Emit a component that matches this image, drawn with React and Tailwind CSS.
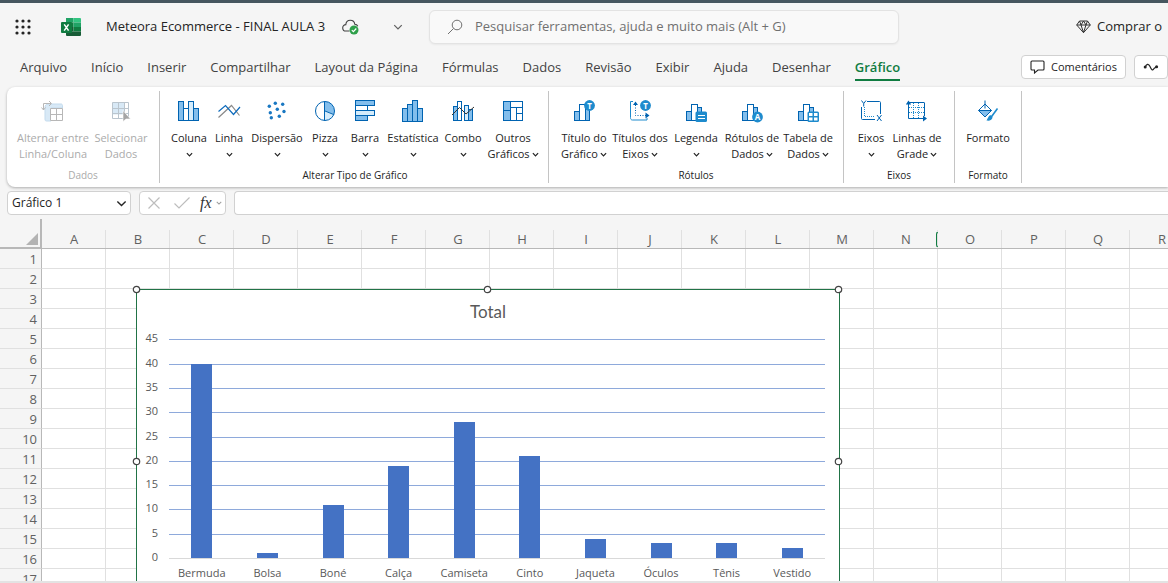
import { useState } from 'react';

const BLUE = '#0f6cbd';
const EDGE = '#0063b1';
const FILL = '#83beec';
const LIGHT = '#d5ecfb';
const BADGE = '#1e8bcd';

function Icon({ children, crisp = false, size = 24 }) {
  return (
    <svg width={size} height={size} viewBox="0 0 24 24" fill="none" aria-hidden="true" className="shrink-0" shapeRendering={crisp ? 'crispEdges' : 'auto'}>
      {children}
    </svg>
  );
}

function Chevron({ size = 8, className = '', width = 1.4 }) {
  return (
    <svg width={size} height={size} viewBox="0 0 8 8" fill="none" aria-hidden="true" className={className}>
      <path d="M1 2.5 4 5.5 7 2.5" stroke="currentColor" strokeWidth={width} />
    </svg>
  );
}

// three small columns used behind the badge of the label icons
function MiniBars() {
  return (
    <g stroke={EDGE} shapeRendering="crispEdges">
      <path d="M2.5 12.5h5v9h-5z" fill={FILL} />
      <path d="M7.5 5.5h6v16h-6z" fill="#fff" />
      <path d="M13.5 8.5h4v13h-4z" fill={FILL} />
    </g>
  );
}

function BadgeLetter({ x, y, children }) {
  return (
    <>
      <circle cx={x} cy={y} r="5.4" fill={BADGE} />
      <text x={x} y={y + 3} textAnchor="middle" fontSize="8" fontWeight="700" fill="#fff" fontFamily="Open Sans, sans-serif">{children}</text>
    </>
  );
}

const icons = {
  swap: (
    <Icon>
      <path d="M4 20.5V8.5c0-2 1-3.500 3-3.500h13c1 0 1.500.8 1.500 1.500V9H10v13H5.500c-1 0-1.500-.7-1.500-1.500z" fill="#cfe4f5" stroke="#b5d3ea" />
      <path d="M9.500 9.500h12v12h-12zM15.500 9.500v12M9.500 15.500h12" stroke="#a6a6a6" fill="#fff" />
      <path d="M2.500 11V4.500H10M8 2l2.500 2.500L8 7M.5 8.500l2 2.500 2-2.500" stroke="#a6a6a6" />
    </Icon>
  ),
  select: (
    <Icon>
      <path d="M3.500 3.500h12v12h-12z" fill="#cfe4f5" />
      <path d="M3.500 3.500h16v16h-16zM9.500 3.500v16M15.500 3.500v16M3.500 9.500h16M3.500 14.500h16" stroke="#a9b7c2" />
      <path d="M14 11.500v11l3-2.500h4.500z" fill="#8f8f8f" stroke="#fff" strokeWidth=".6" />
    </Icon>
  ),
  column: (
    <Icon crisp>
      <g stroke={EDGE}>
        <path d="M1.500 2.500h5v19h-5z" fill={FILL} />
        <path d="M6.500 9.500h5v12h-5z" fill="#fff" />
        <path d="M11.500 2.500h5v19h-5z" fill={LIGHT} />
        <path d="M16.500 9.500h5v12h-5z" fill={FILL} />
      </g>
    </Icon>
  ),
  line: (
    <Icon>
      <path d="M1.500 18.500 14.500 6.500 22.500 16.500" stroke="#8a8a8a" strokeWidth="1.200" />
      <path d="M1.500 12.500 8.500 6.500 16.500 15.500 23 8" stroke={BLUE} strokeWidth="1.200" />
    </Icon>
  ),
  scatter: (
    <Icon>
      {[[10.3, 4.3], [17.7, 5.3], [4.3, 7.3], [12.3, 10.2], [5.3, 13.7], [19, 12.5], [14.3, 17.3], [6.3, 18.7]].map(([x, y]) => (
        <circle key={x} cx={x} cy={y} r="1.700" fill="#1a78c2" />
      ))}
    </Icon>
  ),
  pie: (
    <Icon>
      <path d="M12 2.500a9.500 9.500 0 0 1 8.800 13L12 12z" fill={FILL} />
      <path d="M12 12l8.800 3.600A9.500 9.500 0 0 1 12 21.500z" fill={LIGHT} />
      <circle cx="12" cy="12" r="9.500" stroke={EDGE} />
      <path d="M11.500 2.500v19M12 12l8.800 3.600" stroke={EDGE} />
    </Icon>
  ),
  bar: (
    <Icon crisp>
      <g stroke={EDGE}>
        <path d="M2.500 1.500h19v5h-19z" fill={FILL} />
        <path d="M2.500 6.500h12v5h-12z" fill="#fff" />
        <path d="M2.500 11.500h19v5h-19z" fill={LIGHT} />
        <path d="M2.500 16.500h12v5h-12z" fill={FILL} />
      </g>
    </Icon>
  ),
  stats: (
    <Icon crisp>
      <g stroke={EDGE} fill={FILL}>
        <path d="M1.500 9.500h5v13h-5zM6.500 5.500h5v17h-5zM11.500 1.500h5v21h-5zM16.500 9.500h5v13h-5z" />
      </g>
    </Icon>
  ),
  combo: (
    <Icon>
      <g stroke={EDGE} shapeRendering="crispEdges">
        <path d="M2.500 7.500h4v14h-4z" fill={FILL} />
        <path d="M6.500 2.500h4v19h-4z" fill="#fff" />
        <path d="M13.500 6.500h4v15h-4z" fill={LIGHT} />
        <path d="M17.500 10.500h4v11h-4z" fill={FILL} />
      </g>
      <path d="M1 16 8.500 8.500 15 15 23 8" stroke="#333" />
    </Icon>
  ),
  others: (
    <Icon crisp>
      <path d="M2.500 2.500h19v19h-19z" fill="#fff" />
      <path d="M2.500 2.500h7v19h-7z" fill={FILL} />
      <path d="M2.500 2.500h19v19h-19zM9.500 2.500v19M2.500 11.500h7M9.500 8.500h12M15.500 8.500v13M15.500 14.500h6" stroke={EDGE} />
    </Icon>
  ),
  chartTitle: (
    <Icon>
      <MiniBars />
      <BadgeLetter x={17.5} y={6.5}>T</BadgeLetter>
    </Icon>
  ),
  axisTitles: (
    <Icon>
      <path d="M5 2.500H2.500v16c0 1.500.5 2.500 2 2.500H19v-2" stroke={BADGE} />
      <path d="M7.500 6v10.500H18" stroke={EDGE} strokeDasharray="1 1.500" />
      <path d="M5 6 7.500 2.500l2.500 3.500zM17.500 13.500l4 3-4 3z" fill={EDGE} />
      <BadgeLetter x={17.5} y={6.5}>T</BadgeLetter>
    </Icon>
  ),
  legend: (
    <Icon>
      <MiniBars />
      <rect x="11.500" y="12.500" width="11.500" height="10.500" rx="1.500" fill={BADGE} />
      <path d="M14 16.500h7M14 19.500h7" stroke="#fff" />
    </Icon>
  ),
  dataLabels: (
    <Icon>
      <MiniBars />
      <BadgeLetter x={17.5} y={18}>A</BadgeLetter>
    </Icon>
  ),
  dataTable: (
    <Icon>
      <MiniBars />
      <rect x="11.500" y="12.500" width="11.500" height="10.500" rx="1.500" fill={BADGE} />
      <path d="M13 14h3.500v3H13zM18 14h3.500v3H18zM13 18.500h3.500v3H13zM18 18.500h3.500v3H18z" fill="#fff" />
    </Icon>
  ),
  axes: (
    <Icon>
      <path d="M8 2.500h12.500c.7 0 1 .5 1 1V15M2.500 8v11.500c0 .7.4 1 1 1H16" stroke={EDGE} />
      <path d="M5.500 8v9.500H16" stroke={BADGE} strokeDasharray="1 1" />
      <path d="M2.500 1.500 4.700 4.500 7 1.500M4.700 4.500v3M18 16l4.500 6M22.500 16 18 22" stroke={EDGE} />
    </Icon>
  ),
  gridlines: (
    <Icon>
      <path d="M4 3.500h15c.4 0 .5.200.5.500v13M3.500 5v14.500H18" stroke={EDGE} />
      <path d="M8.500 4v15M13.500 4v15M4 8.500h15M4 13.500h15" stroke={BADGE} strokeDasharray="1 1" />
      <path d="M.8 5.500 3.500 1.500l2.700 4zM18 16.500l4 3-4 3z" fill={EDGE} />
    </Icon>
  ),
  format: (
    <Icon>
      <path d="M2.500 11.500 9 5l6.500 6.500L9 18z" fill="#fff" />
      <path d="M2.500 11.500h13L9 18z" fill={FILL} />
      <path d="M9 1.500v8M2.500 11.500 9 5l6.500 6.500L9 18zM2.500 11.500h13" stroke={EDGE} />
      <path d="M21.500 9.500 14.500 19" stroke={BADGE} strokeWidth="1.600" />
      <path d="M14.800 16.200c-2.300-.2-2.400 2.500-4.300 5.300 3 .6 5.800-.4 6-3.500z" fill={BADGE} />
    </Icon>
  ),
};

// menu: 'own' puts the arrow on its own line, 'inline' after the last word
const groups = [
  {
    name: 'Dados', pad: 'px-2', disabled: true,
    items: [
      { icon: 'swap', lines: ['Alternar entre', 'Linha/Coluna'], width: 'w-19' },
      { icon: 'select', lines: ['Selecionar', 'Dados'], width: 'w-15' },
    ],
  },
  {
    name: 'Alterar Tipo de Gráfico', pad: 'pl-[9px] pr-[7px]',
    items: [
      { icon: 'column', lines: ['Coluna'], width: 'w-10', menu: 'own' },
      { icon: 'line', lines: ['Linha'], width: 'w-10', menu: 'own' },
      { icon: 'scatter', lines: ['Dispersão'], width: 'w-14', menu: 'own' },
      { icon: 'pie', lines: ['Pizza'], width: 'w-10', menu: 'own' },
      { icon: 'bar', lines: ['Barra'], width: 'w-10', menu: 'own' },
      { icon: 'stats', lines: ['Estatística'], width: 'w-14', menu: 'own' },
      { icon: 'combo', lines: ['Combo'], width: 'w-11', menu: 'own' },
      { icon: 'others', lines: ['Outros', 'Gráficos'], width: 'w-14', menu: 'inline' },
    ],
  },
  {
    name: 'Rótulos', pad: 'px-[7px]',
    items: [
      { icon: 'chartTitle', lines: ['Título do', 'Gráfico'], width: 'w-14', menu: 'inline' },
      { icon: 'axisTitles', lines: ['Títulos dos', 'Eixos'], width: 'w-14', menu: 'inline' },
      { icon: 'legend', lines: ['Legenda'], width: 'w-14', menu: 'own' },
      { icon: 'dataLabels', lines: ['Rótulos de', 'Dados'], width: 'w-14', menu: 'inline' },
      { icon: 'dataTable', lines: ['Tabela de', 'Dados'], width: 'w-14', menu: 'inline' },
    ],
  },
  {
    name: 'Eixos', pad: 'px-[9px]',
    items: [
      { icon: 'axes', lines: ['Eixos'], width: 'w-9', menu: 'own' },
      { icon: 'gridlines', lines: ['Linhas de', 'Grade'], width: 'w-14', menu: 'inline' },
    ],
  },
  {
    name: 'Formato', pad: 'px-[7px]',
    items: [{ icon: 'format', lines: ['Formato'], width: 'w-13' }],
  },
];

function RibbonButton({ icon, lines, width, menu, disabled }) {
  return (
    <button type="button" disabled={disabled} className={`flex flex-col items-center text-[11px] leading-4 whitespace-nowrap ${width}`}>
      <span className={disabled ? 'mb-[7px] opacity-80' : 'mb-[7px]'}>{icons[icon]}</span>
      {lines.map((line, i) => (
        <span key={line} className="flex items-center gap-0.5">
          {line}
          {menu === 'inline' && i === lines.length - 1 && <Chevron size={7} />}
        </span>
      ))}
      {menu === 'own' && <span className="flex h-4 items-center"><Chevron size={7} /></span>}
    </button>
  );
}

function Ribbon() {
  return (
    <div className="ml-[7px] flex h-[100px] shrink-0 overflow-hidden rounded-l-lg bg-white py-1 shadow-[0_1px_3px_rgba(0,0,0,0.3)]">
      {groups.map(group => (
        <section key={group.name} aria-label={group.name} className={`flex shrink-0 flex-col justify-between border-r border-[#c4c4c4] pt-2 ${group.pad} ${group.disabled ? 'text-[#ababab]' : 'text-[#242424]'}`}>
          <div className="flex items-start">
            {group.items.map(item => <RibbonButton key={item.icon} {...item} disabled={group.disabled} />)}
          </div>
          <div className="text-center text-[10px] leading-4">{group.name}</div>
        </section>
      ))}
    </div>
  );
}

function TitleBar() {
  return (
    <header className="flex h-12 shrink-0 items-center text-[13px] text-[#242424]">
      <div className="flex w-[429px] shrink-0 items-center">
        <button type="button" aria-label="Iniciador de aplicativos" className="ml-[15px]">
          <svg width="16" height="16" viewBox="0 0 16 16" fill="#242424">
            {[2, 8, 14].map(y => [2, 8, 14].map(x => <circle key={`${x}-${y}`} cx={x} cy={y} r="1.600" />))}
          </svg>
        </button>
        <svg width="20" height="18" viewBox="0 0 20 18" className="ml-[30px] shrink-0" aria-hidden="true">
          <path d="M5 0h7.500v4.500H5z" fill="#21a366" />
          <path d="M12.500 0H19a1 1 0 0 1 1 1v3.500h-7.500z" fill="#33c481" />
          <path d="M5 4.500h7.500V9H5z" fill="#107c41" />
          <path d="M12.500 4.500H20V9h-7.500z" fill="#21a366" />
          <path d="M5 9h7.500v4.500H5z" fill="#185c37" />
          <path d="M12.500 9H20v4.500h-7.500z" fill="#107c41" />
          <path d="M5 13.500h15V17a1 1 0 0 1-1 1H6a1 1 0 0 1-1-1z" fill="#185c37" />
          <rect y="4" width="11" height="11" rx="1" fill="#107c41" />
          <path d="M3.200 6.300 7.600 12.700M7.600 6.300 3.200 12.700" stroke="#fff" strokeWidth="1.500" />
        </svg>
        <span className="ml-[25px] min-w-57 whitespace-nowrap">Meteora Ecommerce - FINAL AULA 3</span>
        <svg width="18" height="16" viewBox="0 0 18 16" fill="none" className="ml-2 shrink-0" aria-hidden="true">
          <path d="M7.500 12H4a3.200 3.200 0 0 1-.2-6.400C4 3 5.800 1.200 8.300 1.200S12.500 3 12.800 5.200c1.400 0 2.500.8 3 2" stroke="#424242" strokeWidth="1.100" />
          <circle cx="12" cy="11" r="4.500" fill="#2fa04a" />
          <path d="M9.800 11.100l1.600 1.600 2.900-3.200" stroke="#fff" strokeWidth="1.200" />
        </svg>
        <button type="button" aria-label="Opções do arquivo" className="mr-[26px] ml-auto text-[#616161]"><Chevron size={10} width={1} /></button>
      </div>
      <label className="flex h-[34px] w-[470px] shrink-0 items-center gap-3 rounded-md border border-[#e3e3e3] bg-[#f9f9f9] px-[17px] text-[#707070] shadow-xs">
        <svg width="16" height="16" viewBox="0 0 16 16" fill="none" aria-hidden="true">
          <circle cx="10" cy="6" r="4.800" stroke="#707070" />
          <path d="M6.500 9.500 1 15" stroke="#707070" />
        </svg>
        <input type="search" aria-label="Pesquisar" placeholder="Pesquisar ferramentas, ajuda e muito mais (Alt + G)" className="min-w-0 flex-1 bg-transparent outline-none placeholder:text-[#707070]" />
      </label>
      <button type="button" className="ml-auto flex shrink-0 items-center gap-1.5 pr-1.5 whitespace-nowrap">
        <svg width="15" height="14" viewBox="0 0 15 14" fill="none" stroke="#333" aria-hidden="true">
          <path d="M3.500 1h8L14.300 5 7.500 12.700.7 5zM.7 5h13.600M5 5l2.500 7.500L10 5M3.500 1 5 5l2.500-4L10 5l1.500-4" />
        </svg>
        Comprar o
      </button>
    </header>
  );
}

const tabs = ['Arquivo', 'Início', 'Inserir', 'Compartilhar', 'Layout da Página', 'Fórmulas', 'Dados', 'Revisão', 'Exibir', 'Ajuda', 'Desenhar', 'Gráfico'];

function TabBar() {
  const [active, setActive] = useState('Gráfico');
  return (
    <div className="flex h-9 shrink-0 items-start pt-1 pl-5">
      <nav className="flex gap-6 text-[13px] leading-6 text-[#424242]">
        {tabs.map(tab => (
          <button key={tab} type="button" onClick={() => setActive(tab)} className={`border-b-2 whitespace-nowrap ${tab === active ? 'border-[#107c41] font-semibold text-[#107c41]' : 'border-transparent'}`}>
            {tab}
          </button>
        ))}
      </nav>
      <div className="ml-auto flex shrink-0 gap-2 text-[11px] text-[#242424]">
        <button type="button" className="flex h-6 w-[105px] items-center justify-center gap-1.5 rounded border border-[#d1d1d1] bg-white">
          <svg width="15" height="14" viewBox="0 0 15 14" fill="none" stroke="#242424" aria-hidden="true">
            <path d="M2 1h11c.6 0 1 .4 1 1v7c0 .6-.4 1-1 1H8l-3.500 3V10H2c-.6 0-1-.4-1-1V2c0-.6.4-1 1-1z" strokeWidth="1.100" />
          </svg>
          Comentários
        </button>
        <button type="button" aria-label="Atualizações" className="flex h-6 w-[34px] items-center justify-center rounded border border-[#d1d1d1] bg-white">
          <svg width="16" height="10" viewBox="0 0 16 10" fill="none" aria-hidden="true">
            <path d="M2 5.500C3.500 2 5.500 1 7 4.500S9.500 9 11 6.500L14 4.500" stroke="#242424" strokeWidth="1.200" />
            <circle cx="2.200" cy="5" r="1.500" fill="#242424" />
            <circle cx="13.600" cy="4.700" r="1.500" fill="#242424" />
          </svg>
        </button>
      </div>
    </div>
  );
}

function FormulaBar() {
  const [name, setName] = useState('Gráfico 1');
  return (
    <div className="mt-1 flex h-6 shrink-0 gap-2 pl-[7px]">
      <div className="flex w-31 shrink-0 items-center rounded border border-[#d1d1d1] bg-white pr-[3px] pl-1 text-[#242424]">
        <input aria-label="Caixa de nome" value={name} onChange={e => setName(e.target.value)} className="min-w-0 flex-1 text-xs outline-none" />
        <Chevron size={11} width={1} />
      </div>
      <div className="flex w-[87px] shrink-0 items-center rounded border border-[#d1d1d1] bg-white pl-2 text-[#bdbdbd]">
        <button type="button" aria-label="Cancelar">
          <svg width="12" height="12" viewBox="0 0 12 12" fill="none" stroke="currentColor" strokeWidth="1.200"><path d="m.5.5 11 11m0-11-11 11" /></svg>
        </button>
        <button type="button" aria-label="Inserir" className="ml-[14px]">
          <svg width="16" height="12" viewBox="0 0 16 12" fill="none" stroke="currentColor" strokeWidth="1.200"><path d="m.5 6.500 4.500 4.500L15.500.5" /></svg>
        </button>
        <button type="button" aria-label="Inserir função" className="ml-2.5 flex items-center gap-1 font-['Liberation_Serif',serif] text-base leading-4 text-[#333] italic">
          <span>fx</span>
          <Chevron size={6} className="text-[#9e9e9e]" />
        </button>
      </div>
      <input aria-label="Barra de fórmulas" className="min-w-0 flex-1 rounded-l border border-r-0 border-[#d1d1d1] bg-white px-2 text-xs outline-none" />
    </div>
  );
}

const columns = 'ABCDEFGHIJKLMNOPQR'.split('');
const rows = Array.from({ length: 17 }, (_, i) => i + 1);

function SheetGrid() {
  return (
    <table className="w-[1194px] table-fixed border-separate border-spacing-0 bg-white">
      <thead>
        <tr className="bg-[#f5f5f5] text-[13px] leading-[18px] text-[#616161]">
          <th className="h-[30px] w-[42px] border-r-2 border-b-2 border-[#b8b8b8] p-0 align-bottom">
            <svg width="12" height="12" viewBox="0 0 12 12" className="mr-0.5 mb-0.5 ml-auto" aria-hidden="true"><path d="M12 0v12H0z" fill="#b3b3b3" /></svg>
          </th>
          {columns.map(col => (
            <th key={col} scope="col" className="border-b border-[#b8b8b8] p-0 align-bottom font-normal">
              <div className="relative h-[18px] border-r border-[#e0e0e0] pl-px">
                {col}
                {col === 'N' && <span className="absolute top-0.5 -right-px h-[15px] w-0.5 rounded-l border-y border-l border-[#107c41]" />}
              </div>
            </th>
          ))}
        </tr>
      </thead>
      <tbody>
        {rows.map(row => (
          <tr key={row}>
            <th scope="row" className="h-5 border-r border-b border-r-[#b8b8b8] border-b-[#e0e0e0] bg-[#f5f5f5] p-0 pr-1 text-right text-[13px] leading-[18px] font-normal text-[#616161]">{row}</th>
            {columns.map(col => <td key={col} className="border-r border-b border-[#e0e0e0] p-0" />)}
          </tr>
        ))}
      </tbody>
    </table>
  );
}

const sales = [
  ['Bermuda', 40], ['Bolsa', 1], ['Boné', 11], ['Calça', 19], ['Camiseta', 28],
  ['Cinto', 21], ['Jaqueta', 4], ['Óculos', 3], ['Tênis', 3], ['Vestido', 2],
];

function SalesChart() {
  const axisY = 273;
  const left = 37;
  const step = 65.6;
  const unit = 4.86;
  const ticks = [45, 40, 35, 30, 25, 20, 15, 10, 5, 0];
  const handles = [[4, 4], [355, 4], [706, 4], [4, 176], [706, 176], [4, 348], [355, 348], [706, 348]];
  return (
    <svg width="712" height="354" viewBox="0 0 712 354" role="img" aria-label="Total" fontFamily="Open Sans, sans-serif">
      <rect x="4.500" y="4.500" width="703" height="344" fill="#fff" stroke="#217346" shapeRendering="crispEdges" />
      <text x="356" y="33" textAnchor="middle" fontSize="17" fill="#595959" fontFamily="Lato, sans-serif">Total</text>
      {ticks.map(t => {
        const y = Math.round(axisY - t * unit) + 0.5;
        return (
          <g key={t}>
            <path d={`M${left} ${y}H693`} stroke={t === 0 ? '#d9d9d9' : '#8ea9db'} shapeRendering="crispEdges" />
            <text x="26" y={y + 2} textAnchor="end" fontSize="11" fill="#595959">{t}</text>
          </g>
        );
      })}
      {sales.map(([name, value], i) => {
        const center = left + step * (i + 0.5);
        const h = Math.round(value * unit);
        return (
          <g key={name}>
            <rect x={Math.round(center - 10.5)} y={axisY - h} width="21" height={h} fill="#4472c4" />
            <text x={center} y={axisY + 19} textAnchor="middle" fontSize="11" fill="#595959">{name}</text>
          </g>
        );
      })}
      {handles.map(([x, y]) => (
        <circle key={`${x}-${y}`} cx={x + 0.5} cy={y + 0.5} r="3.200" fill="#fff" stroke="#444" strokeWidth="1.200" />
      ))}
    </svg>
  );
}

export default function App() {
  return (
    <div className="flex h-screen flex-col overflow-hidden border-t-[3px] border-b-2 border-t-[#46565f] border-b-[#e3e3e3] bg-[#f5f5f5] font-['Open_Sans','Noto_Sans',sans-serif]">
      <TitleBar />
      <TabBar />
      <Ribbon />
      <FormulaBar />
      <main className="relative mt-1 min-h-0 flex-1 overflow-hidden">
        <SheetGrid />
        <div className="absolute top-[66px] left-[132px]"><SalesChart /></div>
      </main>
    </div>
  );
}
